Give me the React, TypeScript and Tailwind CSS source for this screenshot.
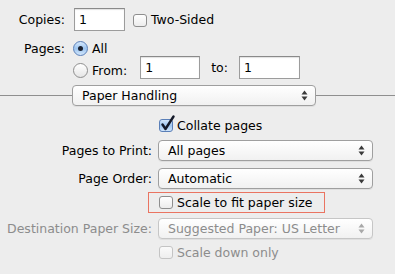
import { ReactNode } from 'react';

const font = "font-['Lucida_Grande','DejaVu_Sans',sans-serif]";

const TextField = ({ value, width }: { value: string; width: string }) => (
  <div
    className={`${width} h-[23px] bg-white border border-[#9c9c9c] border-t-[#8a8a8a] shadow-[inset_0_1px_1px_rgba(0,0,0,0.12)] pl-[4px] flex items-center`}
  >
    {value}
  </div>
);

const Checkbox = ({ checked = false, disabled = false }: { checked?: boolean; disabled?: boolean }) => (
  <div className="relative w-[14px] h-[13px] shrink-0">
    <div
      className={
        checked
          ? 'w-[14px] h-[13px] rounded-[3px] border border-[#5a7fb8] bg-gradient-to-b from-[#d3e6fb] via-[#9fc6f0] to-[#cfe4fb]'
          : disabled
            ? 'w-[14px] h-[13px] rounded-[3px] border border-[#c4c4c4] bg-gradient-to-b from-[#fafafa] to-[#eeeeee]'
            : 'w-[14px] h-[13px] rounded-[3px] border border-[#8e8e8e] bg-gradient-to-b from-white to-[#ececec]'
      }
    />
    {checked && (
      <svg className="absolute left-[1px] top-[-4px]" width="16" height="17" viewBox="0 0 16 17">
        <path d="M2.5 9.5 L5.5 14 L13.5 1.5" fill="none" stroke="#141a2a" strokeWidth="2.4" strokeLinecap="round" strokeLinejoin="round" />
      </svg>
    )}
  </div>
);

const Radio = ({ selected = false }: { selected?: boolean }) => (
  <div
    className={
      selected
        ? 'w-[15px] h-[15px] rounded-full border border-[#5a7fb8] bg-gradient-to-b from-[#d6e8fc] via-[#9cc4ef] to-[#d2e6fb] flex items-center justify-center shrink-0'
        : 'w-[15px] h-[15px] rounded-full border border-[#8e8e8e] bg-gradient-to-b from-white to-[#e6e6e6] shrink-0'
    }
  >
    {selected && <div className="w-[5px] h-[5px] rounded-full bg-[#1c2230]" />}
  </div>
);

const Arrows = ({ disabled = false }: { disabled?: boolean }) => (
  <svg width="7" height="11" viewBox="0 0 7 11" className="shrink-0">
    <path d="M3.5 0.5 L6.5 4.5 L0.5 4.5 Z" fill={disabled ? '#a8a8a8' : '#3a3a3a'} />
    <path d="M3.5 10.5 L6.5 6.5 L0.5 6.5 Z" fill={disabled ? '#a8a8a8' : '#3a3a3a'} />
  </svg>
);

const Popup = ({ label, width, disabled = false }: { label: string; width: string; disabled?: boolean }) => (
  <div
    className={`${width} h-[21px] shrink-0 rounded-[4px] border ${
      disabled ? 'border-[#c6c6c6] text-[#8c8c8c]' : 'border-[#9f9f9f] text-black'
    } bg-gradient-to-b from-white to-[#f1f1f1] shadow-[0_1px_0_rgba(0,0,0,0.06)] flex items-center justify-between pl-[9px] pr-[7px]`}
  >
    <span>{label}</span>
    <Arrows disabled={disabled} />
  </div>
);

const Row = ({ label, children, className = '', muted = false }: { label?: string; children: ReactNode; className?: string; muted?: boolean }) => (
  <div className={`flex items-center ${className}`}>
    <div className={`w-[158px] shrink-0 text-right pr-[6px] ${muted ? 'text-[#8c8c8c]' : ''}`}>{label}</div>
    {children}
  </div>
);

export default function App() {
  return (
    <div className={`w-[395px] h-[274px] bg-[#ededed] ${font} text-[12.5px] leading-[15px] text-black overflow-hidden`}>
      {/* copies & pages */}
      <div className="flex items-center pt-[8px] h-[31px]">
        <div className="w-[65px] text-right">Copies:</div>
        <div className="ml-[9px]">
          <TextField value="1" width="w-[51px]" />
        </div>
        <div className="ml-[8px] mt-[2px]">
          <Checkbox />
        </div>
        <span className="ml-[4px]">Two-Sided</span>
      </div>

      <div className="flex items-center mt-[10px] h-[15px]">
        <div className="w-[65px] text-right">Pages:</div>
        <div className="ml-[8px]">
          <Radio selected />
        </div>
        <span className="ml-[4px]">All</span>
      </div>

      <div className="flex items-center h-[23px]">
        <div className="w-[73px]" />
        <div className="mt-[6px] flex items-center">
          <Radio />
          <span className="ml-[4px]">From:</span>
        </div>
        <div className="ml-[13px]">
          <TextField value="1" width="w-[60px]" />
        </div>
        <span className="ml-[11px]">to:</span>
        <div className="ml-[11px]">
          <TextField value="1" width="w-[61px]" />
        </div>
      </div>

      {/* section popup */}
      <div className="flex items-center mt-[6px] h-[21px]">
        <div className="w-[72px] h-px bg-[#8f8f8f]" />
        <Popup label="Paper Handling" width="w-[244px]" />
        <div className="flex-1 h-px bg-[#8f8f8f]" />
      </div>

      {/* paper handling options */}
      <Row className="mt-[13px] h-[13px]">
        <div className="ml-[1px]">
          <Checkbox checked />
        </div>
        <span className="ml-[4px]">Collate pages</span>
      </Row>

      <Row label="Pages to Print:" className="mt-[8px] h-[21px]">
        <Popup label="All pages" width="w-[215px]" />
      </Row>

      <Row label="Page Order:" className="mt-[7px] h-[21px]">
        <Popup label="Automatic" width="w-[215px]" />
      </Row>

      <div className="flex mt-[3px] h-[21px]">
        <div className="ml-[148px] w-[177px] h-[21px] border border-[#ea7461] flex items-center pl-[10px]">
          <Checkbox />
          <span className="ml-[4px]">Scale to fit paper size</span>
        </div>
      </div>

      <Row label="Destination Paper Size:" className="mt-[5px] h-[21px]" muted>
        <Popup label="Suggested Paper: US Letter" width="w-[215px]" disabled />
      </Row>

      <Row className="mt-[7px] h-[13px] text-[#8c8c8c]">
        <div className="ml-[1px]">
          <Checkbox disabled />
        </div>
        <span className="ml-[4px]">Scale down only</span>
      </Row>
    </div>
  );
}
